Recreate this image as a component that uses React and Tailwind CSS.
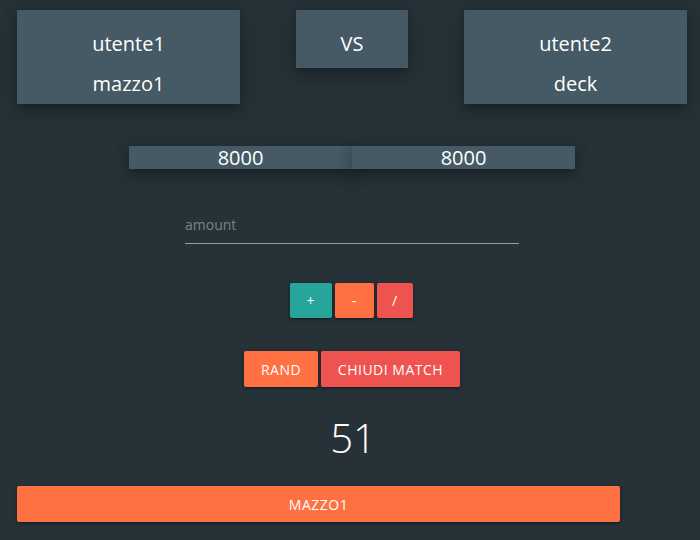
import React, { useState } from 'react';

const shadow = 'shadow-[0_2px_2px_0_rgba(0,0,0,0.14),0_3px_1px_-2px_rgba(0,0,0,0.12),0_1px_5px_0_rgba(0,0,0,0.2)]';
const deepShadow = 'shadow-[0_8px_17px_2px_rgba(0,0,0,0.14),0_3px_14px_2px_rgba(0,0,0,0.12),0_5px_5px_-3px_rgba(0,0,0,0.2)]';

const PlayerCard = ({ user, deck }) => (
  <div className={`w-[223px] h-[94px] pt-[12px] bg-[#455a64] flex flex-col items-center justify-center gap-[13px] text-[20px] leading-[27px] text-white ${deepShadow}`}>
    <span>{user}</span>
    <span>{deck}</span>
  </div>
);

const App = () => {
  const [amount, setAmount] = useState('');

  return (
    <div className="w-[700px] h-[540px] bg-[#263238] overflow-hidden text-white" style={{ fontFamily: '"Open Sans", "Noto Sans", sans-serif' }}>
      {/* giocatori */}
      <div className="flex justify-between items-start pt-[10px] pl-[17px] pr-[13px]">
        <PlayerCard user="utente1" deck="mazzo1" />
        <div className={`w-[112px] h-[58px] pt-[10px] bg-[#455a64] flex items-center justify-center text-[20px] ${deepShadow}`}>VS</div>
        <PlayerCard user="utente2" deck="deck" />
      </div>

      {/* punti vita */}
      <div className="flex justify-center mt-[42px] pl-[4px]">
        <div className={`w-[223px] h-[23px] bg-[#455a64] flex items-center justify-center text-[20px] leading-none ${deepShadow}`}>8000</div>
        <div className={`w-[223px] h-[23px] bg-[#455a64] flex items-center justify-center text-[20px] leading-none ${deepShadow}`}>8000</div>
      </div>

      {/* importo */}
      <div className="flex justify-center mt-[41px] pl-[4px]">
        <input
          value={amount}
          onChange={e => setAmount(e.target.value)}
          placeholder="amount"
          className="w-[334px] h-[34px] pb-[4px] bg-transparent border-b border-[#9e9e9e] outline-none text-[14px] text-white placeholder:text-[#79838a]"
        />
      </div>

      <div className="flex justify-center gap-[3px] mt-[39px] pl-[2px]">
        <button className={`w-[42px] h-[35px] rounded-[2px] bg-[#26a69a] text-[14px] ${shadow}`}>+</button>
        <button className={`w-[39px] h-[35px] rounded-[2px] bg-[#ff7043] text-[14px] ${shadow}`}>-</button>
        <button className={`w-[36px] h-[35px] rounded-[2px] bg-[#ef5350] text-[14px] ${shadow}`}>/</button>
      </div>

      <div className="flex justify-center gap-[3px] mt-[33px] pl-[4px]">
        <button className={`w-[74px] h-[36px] rounded-[2px] bg-[#ff7043] text-[14px] uppercase tracking-[0.5px] ${shadow}`}>Rand</button>
        <button className={`w-[139px] h-[36px] rounded-[2px] bg-[#ef5350] text-[14px] uppercase tracking-[0.5px] ${shadow}`}>Chiudi match</button>
      </div>

      <div className="text-center text-[40px] font-light leading-none mt-[31px] pl-[6px]">51</div>

      <div className="pl-[17px] mt-[28px]">
        <button className={`w-[603px] h-[36px] rounded-[2px] bg-[#ff7043] text-[14px] uppercase tracking-[0.5px] ${shadow}`}>mazzo1</button>
      </div>
    </div>
  );
};

export default App;
